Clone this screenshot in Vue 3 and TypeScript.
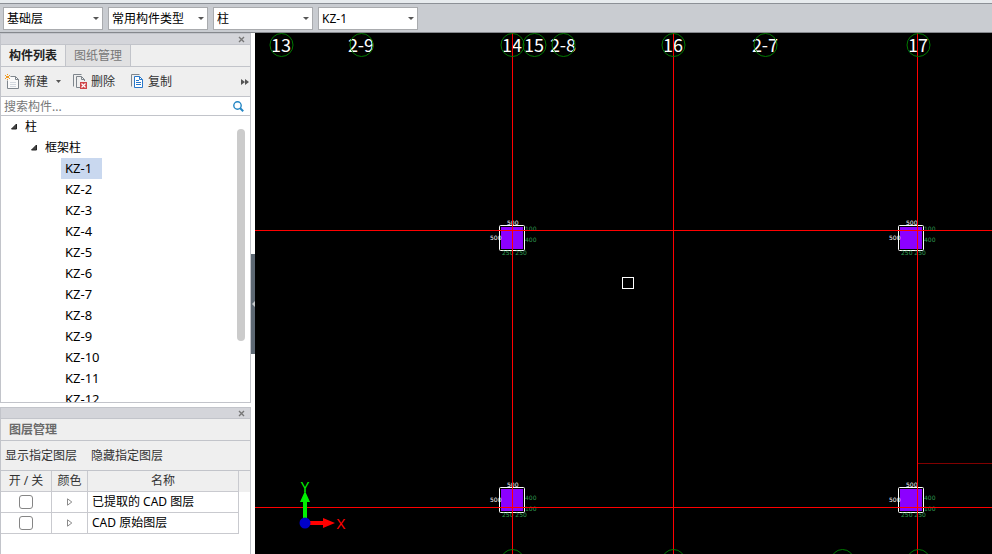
<script setup lang="ts">
import { ref } from 'vue'

interface Picker {
  id: string
  label: string
  value: string
}

interface Layer {
  id: string
  name: string
  on: boolean
}

interface Bubble {
  x: number
  text: string
}

interface Column {
  x: number
  y: number
  upper: string
  lower: string
  upperY: number
  lowerY: number
}

const pickers = ref<Picker[]>([
  { id: 'floor', label: '楼层', value: '基础层' },
  { id: 'category', label: '构件类型', value: '常用构件类型' },
  { id: 'kind', label: '构件', value: '柱' },
  { id: 'member', label: '构件名称', value: 'KZ-1' },
])

const members: string[] = Array.from({ length: 12 }, (_, i) => `KZ-${i + 1}`)
const selected = ref('KZ-1')
const keyword = ref('')

const layers = ref<Layer[]>([
  { id: 'extracted', name: '已提取的 CAD 图层', on: false },
  { id: 'original', name: 'CAD 原始图层', on: false },
])

const bubbles: Bubble[] = [
  { x: 26, text: '13' },
  { x: 106, text: '2-9' },
  { x: 257, text: '14' },
  { x: 279, text: '15' },
  { x: 308, text: '2-8' },
  { x: 418, text: '16' },
  { x: 510, text: '2-7' },
  { x: 663, text: '17' },
]

const lowerBubbles: number[] = [257, 418, 587, 663]

const columns: Column[] = [
  { x: 244, y: 192, upper: '100', lower: '400', upperY: 6, lowerY: 17 },
  { x: 643, y: 192, upper: '100', lower: '400', upperY: 6, lowerY: 17 },
  { x: 244, y: 454, upper: '400', lower: '100', upperY: 13, lowerY: 24 },
  { x: 643, y: 454, upper: '400', lower: '100', upperY: 13, lowerY: 24 },
]
</script>

<template>
  <div class="app">
    <div class="strip"></div>
    <header class="pickers">
      <div v-for="p in pickers" :key="p.id" class="picker">
        <select v-model="p.value" :aria-label="p.label">
          <option :value="p.value">{{ p.value }}</option>
        </select>
        <svg class="caret" width="6" height="3" viewBox="0 0 6 3"><path d="M0 0h6L3 3z" /></svg>
      </div>
    </header>

    <div class="body">
      <aside class="side">
        <section class="panel members">
          <div class="grip">
            <button class="close" aria-label="关闭构件列表">
              <svg width="7" height="7" viewBox="0 0 7 7"><path d="M1 1l5 5M6 1L1 6" /></svg>
            </button>
          </div>
          <div class="tabs">
            <button class="tab active">构件列表</button>
            <button class="tab">图纸管理</button>
          </div>
          <div class="tools">
            <button class="tool">
              <svg width="15" height="16" viewBox="0 0 15 16">
                <path d="M5.500 2.500h5l3 3v9h-11v-8" fill="#fafafa" stroke="#7f868d" />
                <path d="M10.500 2.500v3h3" fill="none" stroke="#7f868d" />
                <path d="M5 8.500h6M5 10.500h6M5 12.500h6" stroke="#d3d8df" />
                <path d="M0 1h1v1H0zM2 0h1v1H2zM4 1h1v1H4zM1 2h3v2H1zM0 4h1v1H0zM4 4h1v1H4zM2 5h1v1H2z" fill="#f09a20" />
              </svg>
              <span>新建</span>
              <svg class="mini" width="5" height="3" viewBox="0 0 5 3"><path d="M0 0h5L2.500 3z" fill="#555" /></svg>
            </button>
            <button class="tool">
              <svg width="14" height="16" viewBox="0 0 14 16">
                <path d="M.5 12.500V.5h8" fill="none" stroke="#7f868d" />
                <path d="M8 13.500H3.500v-11h5l3 3V7M8.500 2.500v3h3" fill="none" stroke="#7f868d" />
                <path d="M7 8h7v7H7z" fill="#cf4449" />
                <path d="M8.500 9.500l4 4M12.500 9.500l-4 4" stroke="#fff" stroke-width="1.200" />
              </svg>
              <span>删除</span>
            </button>
            <button class="tool">
              <svg width="13" height="16" viewBox="0 0 13 16">
                <path d="M.5 12.500V.5h8" fill="none" stroke="#7f868d" />
                <path d="M3.500 2.500h5l3 3v8h-8z" fill="#fff" stroke="#2877c9" />
                <path d="M8.500 2.500v3h3M5 6.500h3M5 8.500h5M5 10.500h5" fill="none" stroke="#2877c9" />
              </svg>
              <span>复制</span>
            </button>
            <button class="more" aria-label="更多">
              <svg width="8" height="6" viewBox="0 0 8 6"><path d="M0 0l4 3-4 3zM4 0l4 3-4 3z" fill="#555" /></svg>
            </button>
          </div>
          <div class="search">
            <input v-model="keyword" type="text" aria-label="搜索构件" placeholder="搜索构件..." />
            <button aria-label="搜索">
              <svg width="11" height="11" viewBox="0 0 11 11">
                <circle cx="4.500" cy="4.500" r="3.700" fill="none" stroke="#2486c4" stroke-width="1.400" />
                <path d="M7 7l3.200 3.200" stroke="#2486c4" stroke-width="2" />
              </svg>
            </button>
          </div>
          <div class="tree">
            <ul>
              <li>
                <div class="node"><svg width="7" height="7" viewBox="0 0 7 7"><path d="M6.500 1v5h-5z" /></svg>柱</div>
                <ul>
                  <li>
                    <div class="node nested"><svg width="7" height="7" viewBox="0 0 7 7"><path d="M6.500 1v5h-5z" /></svg>框架柱</div>
                    <ul class="leaves">
                      <li v-for="m in members" :key="m">
                        <button :class="['leaf', { selected: m === selected }]" @click="selected = m">{{ m }}</button>
                      </li>
                    </ul>
                  </li>
                </ul>
              </li>
            </ul>
            <div class="scrollbar"></div>
          </div>
        </section>

        <section class="panel layers">
          <div class="grip">
            <button class="close" aria-label="关闭图层管理">
              <svg width="7" height="7" viewBox="0 0 7 7"><path d="M1 1l5 5M6 1L1 6" /></svg>
            </button>
          </div>
          <h2>图层管理</h2>
          <div class="actions">
            <button>显示指定图层</button>
            <button>隐藏指定图层</button>
          </div>
          <div class="sheet">
            <table>
              <thead>
                <tr>
                  <th class="toggle">开 / 关</th>
                  <th class="colour">颜色</th>
                  <th>名称</th>
                </tr>
              </thead>
              <tbody>
                <tr v-for="l in layers" :key="l.id">
                  <td class="toggle"><input v-model="l.on" type="checkbox" :aria-label="l.name" /></td>
                  <td class="colour">
                    <svg width="6" height="8" viewBox="0 0 6 8"><path d="M.5 .8L4.800 4 .5 7.200z" fill="none" stroke="#8a8a8a" /></svg>
                  </td>
                  <td>{{ l.name }}</td>
                </tr>
              </tbody>
            </table>
          </div>
        </section>
      </aside>

      <div class="splitter">
        <button aria-label="收起面板">
          <svg width="3" height="6" viewBox="0 0 3 6"><path d="M3 0v6L0 3z" fill="#c6c9cd" /></svg>
        </button>
      </div>

      <main class="canvas">
        <svg viewBox="0 0 737 521" preserveAspectRatio="xMinYMin slice">
          <g v-for="(c, i) in columns" :key="i" :transform="`translate(${c.x} ${c.y})`">
            <rect x=".5" y=".5" width="25" height="25" rx="1" fill="#000" stroke="#fff" />
            <rect x="2" y="2" width="22" height="22" fill="#8c00ff" />
            <g class="dims white">
              <text x="-9" y="15">500</text>
              <text x="8" y="0">500</text>
            </g>
            <g class="dims green">
              <text x="26" :y="c.upperY">{{ c.upper }}</text>
              <text x="26" :y="c.lowerY">{{ c.lower }}</text>
              <text x="3" y="30">250 250</text>
            </g>
          </g>

          <g class="bubbles">
            <text v-for="b in bubbles" :key="b.text" :x="b.x" y="19">{{ b.text }}</text>
          </g>

          <g class="axes">
            <path d="M257.500 0V521M418.500 0V521M662.500 0V521M0 197.500H737M0 474.500H737" />
            <path class="faint" d="M663 430.500H737" />
          </g>

          <g class="rings">
            <circle v-for="b in bubbles" :key="b.text" :cx="b.x + 0.5" cy="12" r="11.500" />
            <circle v-for="x in lowerBubbles" :key="x" :cx="x + 0.5" cy="528" r="11.500" />
          </g>

          <rect x="367.500" y="244.500" width="11" height="11" fill="none" stroke="#fff" />

          <g class="ucs">
            <path d="M48 489V469h-3l5-11 5 11h-3v20z" fill="#00f000" />
            <path d="M51 488h17v-3l12 5-12 5v-3H51z" fill="#f00" />
            <circle cx="50" cy="490" r="5.500" fill="#0000c8" />
            <text x="50" y="459" fill="#00f000">Y</text>
            <text x="86" y="496" fill="#f00">X</text>
          </g>
        </svg>
      </main>
    </div>
  </div>
</template>

<style>
body {
  margin: 0;
  overflow: hidden;
}
</style>

<style scoped>
* {
  box-sizing: border-box;
}

.app {
  display: flex;
  flex-direction: column;
  height: 100vh;
  background: #fff;
  color: #000;
  font: 12px/21px "Noto Sans", "Noto Sans CJK SC", sans-serif;
}

button,
input,
select {
  margin: 0;
  padding: 0;
  border: 0;
  background: none;
  color: inherit;
  font: inherit;
}

svg {
  display: block;
  flex: none;
}

ul {
  margin: 0;
  padding: 0;
  list-style: none;
}

.strip {
  flex: none;
  height: 4px;
  border-bottom: 1px solid #8c9096;
  background: #e7ebee;
}

.pickers {
  display: flex;
  flex: none;
  gap: 5px;
  height: 29px;
  padding: 3px;
  border-bottom: 1px solid #85888d;
  background: #c9ccd1;
}

.picker {
  position: relative;
  width: 100px;
  height: 23px;
}

.picker select {
  width: 100%;
  height: 100%;
  padding: 0 16px 0 3px;
  border: 1px solid #a9abae;
  border-radius: 0;
  background: #fff;
  appearance: none;
}

.caret {
  position: absolute;
  top: 10px;
  right: 4px;
  fill: #555;
  pointer-events: none;
}

.body {
  display: flex;
  flex: 1;
  min-height: 0;
}

.side {
  display: flex;
  flex: none;
  flex-direction: column;
  gap: 4px;
  width: 251px;
}

.panel {
  display: flex;
  flex-direction: column;
  border: 1px solid #c2c4ca;
}

.members {
  flex: 1;
  min-height: 0;
}

.layers {
  flex: none;
  height: 147px;
  border-bottom: 0;
}

.grip {
  display: flex;
  flex: none;
  align-items: center;
  justify-content: flex-end;
  height: 11px;
  padding-right: 5px;
  border-bottom: 1px solid #c2c4ca;
  background: #d4d5da;
}

.close svg {
  fill: none;
  stroke: #777;
  stroke-width: 1.4;
}

.tabs {
  display: flex;
  flex: none;
  height: 22px;
  border-bottom: 1px solid #c2c4ca;
  background: #efefef;
}

.tab {
  width: 65px;
  border-right: 1px solid #c2c4ca;
  background: #e1e1e2;
  color: #777;
}

.tab.active {
  background: #efefef;
  color: #222;
  font-weight: 700;
}

.tools {
  display: flex;
  flex: none;
  align-items: center;
  gap: 16px;
  height: 30px;
  padding: 0 1px 0 4px;
  border-bottom: 1px solid #c2c4ca;
  background: #efefef;
  color: #333;
}

.tool {
  display: flex;
  align-items: center;
  gap: 4px;
}

.mini {
  margin: 0 -4px 0 4px;
}

.more {
  margin-left: auto;
}

.search {
  display: flex;
  flex: none;
  align-items: center;
  height: 19px;
  padding: 0 6px 0 3px;
  border-bottom: 1px solid #c2c4ca;
}

.search input {
  flex: 1;
  min-width: 0;
  height: 18px;
  outline: 0;
}

.search input::placeholder {
  color: #777;
}

.tree {
  position: relative;
  flex: 1;
  min-height: 0;
  overflow: hidden;
}

.node {
  display: flex;
  align-items: center;
  gap: 8px;
  height: 21px;
  padding-left: 9px;
}

.node.nested {
  padding-left: 29px;
}

.node svg {
  fill: #444;
  stroke: #222;
}

.leaves {
  padding-left: 60px;
  font-size: 13px;
}

.leaves li {
  height: 21px;
}

.leaf {
  display: block;
  height: 21px;
  padding: 0 10px 0 4px;
}

.leaf.selected {
  background: #c9d8ef;
}

.scrollbar {
  position: absolute;
  top: 13px;
  right: 5px;
  bottom: 61px;
  width: 8px;
  border-radius: 4px;
  background: #cbcbcb;
}

h2 {
  flex: none;
  height: 22px;
  margin: 0;
  padding-left: 8px;
  border-bottom: 1px solid #c2c4ca;
  background: #efefef;
  color: #6a6a6a;
  font-size: 12px;
  font-weight: 700;
  line-height: 21px;
}

.actions {
  display: flex;
  flex: none;
  align-items: center;
  gap: 14px;
  height: 30px;
  padding-left: 4px;
  border-bottom: 1px solid #c2c4ca;
  background: #efefef;
  color: #333;
}

.sheet {
  flex: 1;
  padding-right: 11px;
  background: linear-gradient(#efefef 21px, #fff 21px);
}

table {
  width: 100%;
  border-collapse: separate;
  border-spacing: 0;
  table-layout: fixed;
}

th,
td {
  height: 21px;
  padding: 0 4px;
  border-right: 1px solid #c9cacf;
  border-bottom: 1px solid #c9cacf;
  line-height: 20px;
  text-align: left;
  white-space: nowrap;
}

th {
  padding: 0;
  color: #333;
  font-weight: 400;
  text-align: center;
}

.toggle {
  width: 51px;
  text-align: center;
}

.colour {
  width: 36px;
}

td.colour svg {
  margin: 0 auto;
}

td input {
  display: block;
  width: 14px;
  height: 14px;
  margin: 0 auto;
  border: 1px solid #858585;
  border-radius: 3px;
  background: #fff;
  appearance: none;
}

td input:checked {
  background: #2877c9;
}

.splitter {
  display: flex;
  flex: none;
  align-items: center;
  width: 4px;
}

.splitter button {
  display: flex;
  align-items: center;
  justify-content: flex-end;
  width: 4px;
  height: 100px;
  margin-top: 21px;
  background: #5d6873;
}

.canvas {
  flex: 1;
  min-width: 0;
  overflow: hidden;
  background: #000;
}

.canvas > svg {
  width: 100%;
  height: 100%;
}

.bubbles text {
  fill: #fff;
  font: 18px "Noto Sans CJK SC", sans-serif;
  text-anchor: middle;
}

.rings circle {
  fill: none;
  stroke: #007a00;
}

.axes path {
  stroke: #f00;
}

.axes .faint {
  stroke: #800000;
}

.ucs text {
  font: 15px "Noto Sans", sans-serif;
  text-anchor: middle;
}

.dims text {
  font: 6px "DejaVu Sans", sans-serif;
}

.white text {
  fill: #fff;
}

.green text {
  fill: #2f9d50;
}
</style>
